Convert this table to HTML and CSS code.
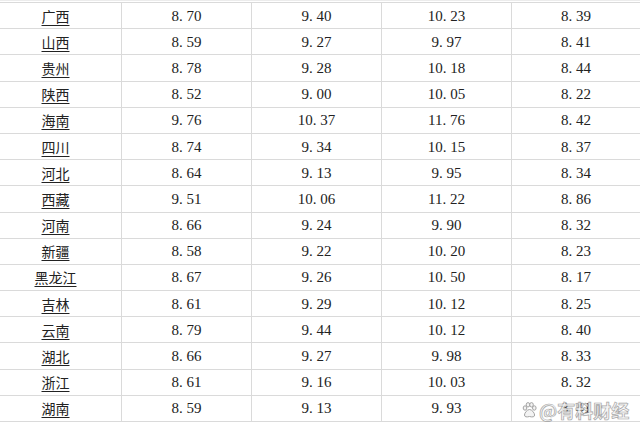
FILE: index.html
```html
<!DOCTYPE html>
<html lang="zh">
<head>
<meta charset="utf-8">
<link rel="stylesheet" href="styles.css">
</head>
<body>
<div class="page">
  <div class="sheet" id="sheet"></div>
  <div class="watermark">
    <svg class="paw" width="15" height="16" viewBox="0 0 15 16">
      <g fill="#f2f2f2" stroke="#9a9a9a" stroke-width="1">
        <ellipse cx="3" cy="6" rx="1.8" ry="2.2"/>
        <ellipse cx="6" cy="2.8" rx="1.8" ry="2.2"/>
        <ellipse cx="9.5" cy="2.8" rx="1.8" ry="2.2"/>
        <ellipse cx="12.3" cy="6" rx="1.8" ry="2.2"/>
        <path d="M7.5 7.5 C5 7.5 2.5 11 2.5 13 C2.5 15 4.5 15.3 7.5 14.5 C10.5 15.3 12.6 15 12.6 13 C12.6 11 10 7.5 7.5 7.5 Z"/>
      </g>
    </svg>
    <span class="wm-text">@有料财经</span>
  </div>
</div>
<script>
const rows = [
["广西","8.70","9.40","10.23","8.39"],
["山西","8.59","9.27","9.97","8.41"],
["贵州","8.78","9.28","10.18","8.44"],
["陕西","8.52","9.00","10.05","8.22"],
["海南","9.76","10.37","11.76","8.42"],
["四川","8.74","9.34","10.15","8.37"],
["河北","8.64","9.13","9.95","8.34"],
["西藏","9.51","10.06","11.22","8.86"],
["河南","8.66","9.24","9.90","8.32"],
["新疆","8.58","9.22","10.20","8.23"],
["黑龙江","8.67","9.26","10.50","8.17"],
["吉林","8.61","9.29","10.12","8.25"],
["云南","8.79","9.44","10.12","8.40"],
["湖北","8.66","9.27","9.98","8.33"],
["浙江","8.61","9.16","10.03","8.32"],
["湖南","8.59","9.13","9.93","8.41"]
];
const sheet = document.getElementById('sheet');
for (const r of rows) {
  const row = document.createElement('div');
  row.className = 'row';
  const name = document.createElement('div');
  name.className = 'cell name';
  const u = document.createElement('span');
  u.className = 'link';
  u.textContent = r[0];
  name.appendChild(u);
  row.appendChild(name);
  for (let i = 1; i < 5; i++) {
    const c = document.createElement('div');
    c.className = 'cell num';
    const [a, b] = r[i].split('.');
    c.innerHTML = a + '<span class="dot">.</span>' + b;
    row.appendChild(c);
  }
  sheet.appendChild(row);
}
</script>
</body>
</html>
```
FILE: styles.css
```css
html, body {
  margin: 0;
  padding: 0;
  background: #ffffff;
}
.page {
  width: 640px;
  height: 427px;
  overflow: hidden;
  position: relative;
  border-top: 1px solid #ececec;
  box-sizing: border-box;
  padding-top: 1px;
}
.sheet {
  border-top: 1px solid #dadada;
}
.row {
  display: grid;
  grid-template-columns: 122px 130px 130px 130px 1fr;
  height: 26.2px;
  box-sizing: border-box;
  border-bottom: 1px solid #dadada;
}
.cell {
  display: flex;
  align-items: center;
  justify-content: center;
  border-right: 1px solid #dadada;
  color: #222222;
}
.cell:last-child {
  border-right: none;
}
.name {
  padding-right: 10px;
  font-family: "Noto Sans CJK SC", sans-serif;
  font-size: 14px;
}
.link {
  text-decoration: underline;
  text-underline-offset: 3px;
  text-decoration-thickness: 1px;
  color: #222222;
}
.num {
  font-family: "Liberation Serif", serif;
  font-size: 15px;
  color: #222222;
  padding-top: 1px;
}
.dot {
  padding-right: 0.25em;
}
.watermark {
  position: absolute;
  left: 522px;
  top: 396px;
  display: flex;
  align-items: center;
  gap: 2px;
  opacity: 0.9;
}
.wm-text {
  font-family: "Noto Sans CJK SC", sans-serif;
  font-size: 18px;
  font-weight: 700;
  color: #f3f3f3;
  -webkit-text-stroke: 0.7px #9c9c9c;
}
```
